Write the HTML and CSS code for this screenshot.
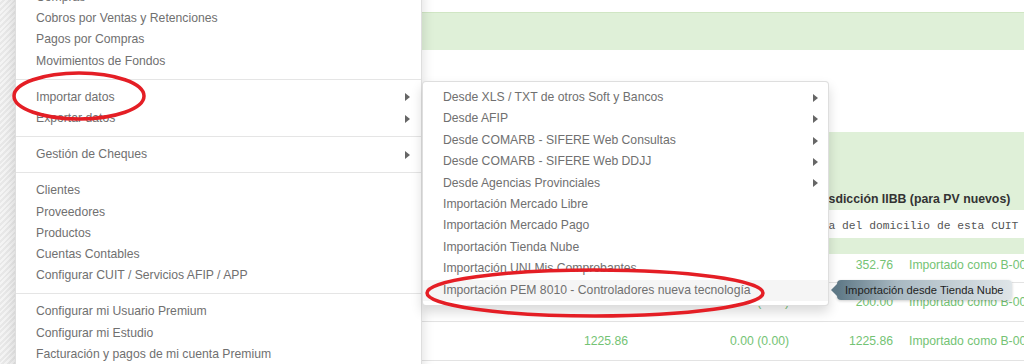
FILE: index.html
```html
<!DOCTYPE html>
<html lang="es">
<head>
    <meta charset="UTF-8">
    <title>Importar datos</title>
    <link rel="stylesheet" href="styles.css">
</head>
<body>
    <div class="page">
        <div class="strip"></div>
        <main class="content">
            <div class="band"></div>
            <div class="panel">
                <div class="panel-head">
                    <span class="head-label">Jurisdicción IIBB (para PV nuevos)</span>
                </div>
                <div class="input-row">
                    <span class="mono">Tomar la del domicilio de esta CUIT</span>
                </div>
                <div class="sub-head"></div>
                <div class="row first">
                    <span class="num"></span>
                    <span class="num"></span>
                    <span class="num">352.76</span>
                    <span class="status">Importado como B-0001</span>
                </div>
                <div class="row">
                    <span class="num">200.00</span>
                    <span class="num">0.00 (0.00)</span>
                    <span class="num">200.00</span>
                    <span class="status">Importado como B-0001</span>
                </div>
                <div class="row">
                    <span class="num">1225.86</span>
                    <span class="num">0.00 (0.00)</span>
                    <span class="num">1225.86</span>
                    <span class="status">Importado como B-0001</span>
                </div>
            </div>
        </main>
    </div>

    <!-- dropdown principal -->
    <ul class="menu main-menu">
        <li><a href="#">Compras</a></li>
        <li><a href="#">Cobros por Ventas y Retenciones</a></li>
        <li><a href="#">Pagos por Compras</a></li>
        <li><a href="#">Movimientos de Fondos</a></li>
        <li class="divider"></li>
        <li><a href="#">Importar datos <i class="caret"></i></a></li>
        <li><a href="#">Exportar datos <i class="caret"></i></a></li>
        <li class="divider"></li>
        <li><a href="#">Gestión de Cheques <i class="caret"></i></a></li>
        <li class="divider"></li>
        <li><a href="#">Clientes</a></li>
        <li><a href="#">Proveedores</a></li>
        <li><a href="#">Productos</a></li>
        <li><a href="#">Cuentas Contables</a></li>
        <li><a href="#">Configurar CUIT / Servicios AFIP / APP</a></li>
        <li class="divider"></li>
        <li><a href="#">Configurar mi Usuario Premium</a></li>
        <li><a href="#">Configurar mi Estudio</a></li>
        <li><a href="#">Facturación y pagos de mi cuenta Premium</a></li>
    </ul>

    <!-- submenu de Importar datos -->
    <ul class="menu sub-menu">
        <li><a href="#">Desde XLS / TXT de otros Soft y Bancos <i class="caret"></i></a></li>
        <li><a href="#">Desde AFIP <i class="caret"></i></a></li>
        <li><a href="#">Desde COMARB - SIFERE Web Consultas <i class="caret"></i></a></li>
        <li><a href="#">Desde COMARB - SIFERE Web DDJJ <i class="caret"></i></a></li>
        <li><a href="#">Desde Agencias Provinciales <i class="caret"></i></a></li>
        <li><a href="#">Importación Mercado Libre</a></li>
        <li><a href="#">Importación Mercado Pago</a></li>
        <li><a href="#">Importación Tienda Nube</a></li>
        <li><a href="#">Importación UNI Mis Comprobantes</a></li>
        <li class="active"><a href="#">Importación PEM 8010 - Controladores nueva tecnología</a></li>
    </ul>

    <div class="tip">Importación desde Tienda Nube</div>

    <!-- marcas rojas a mano -->
    <svg class="marks" width="1024" height="364" viewBox="0 0 1024 364">
        <ellipse cx="79" cy="96" rx="65" ry="23" fill="none" stroke="#e41e25" stroke-width="3.5"/>
        <ellipse cx="595" cy="293" rx="168" ry="23" fill="none" stroke="#e41e25" stroke-width="3.5"/>
    </svg>
</body>
</html>
```

FILE: styles.css
```css
body {
    margin: 0;
    width: 1024px;
    height: 364px;
    overflow: hidden;
    position: relative;
    font-family: "Liberation Sans", Arial, sans-serif;
    background-color: #fff;
}
.page {
    display: flex;
    height: 364px;
}
.strip {
    width: 15px;
    flex-shrink: 0;
    background: repeating-linear-gradient(135deg, #f4f4f4 0 2px, #e8e8e8 2px 4px);
}
.content {
    flex: 1;
    padding-top: 12px;
    min-width: 0;
    overflow: hidden;
}
.band {
    height: 37px;
    border-top: 1px solid #d0e6c4;
    background-color: #dff0d8;
    margin-bottom: 82px;
}
.panel-head,
.row {
    display: grid;
    grid-template-columns: 613px 161px 104px 1fr;
}
.panel-head {
    height: 78px;
    background-color: #dff0d8;
    align-items: end;
}
.head-label {
    grid-column: 3 / span 2;
    padding-left: 17px;
    padding-bottom: 3px;
    font-weight: bold;
    font-size: 12.3px;
    line-height: 15px;
    color: #333;
    white-space: nowrap;
}
.input-row {
    height: 28px;
    padding-left: 766px;
    line-height: 28px;
    white-space: nowrap;
}
.mono {
    font-family: "Liberation Mono", "Courier New", monospace;
    font-size: 11.3px;
    color: #555;
}
.sub-head {
    height: 16px;
    background-color: #dff0d8;
}
.row {
    height: 39px;
    border-bottom: 1px solid #e3e3e3;
    box-sizing: border-box;
    align-items: center;
    font-size: 12.2px;
    color: #74c374;
    white-space: nowrap;
}
.row.first {
    height: 29px;
    align-items: start;
    padding-top: 4px;
}
.num {
    text-align: right;
}
.status {
    padding-left: 16px;
}
.menu {
    position: absolute;
    margin: 0;
    list-style: none;
    width: 407px;
    box-sizing: border-box;
    background-color: #fff;
    border: 1px solid rgba(0,0,0,0.13);
    box-shadow: 0 6px 12px rgba(0,0,0,0.15);
    font-size: 12.2px;
}
.menu a {
    display: flex;
    justify-content: space-between;
    align-items: center;
    padding: 3px 11px 3px 20px;
    line-height: 15.2px;
    color: #707070;
    text-decoration: none;
    white-space: nowrap;
}
.menu .divider {
    height: 1px;
    margin: 7px 0;
    background-color: #e5e5e5;
}
.caret {
    width: 0;
    height: 0;
    border-left: 5px solid #666;
    border-top: 4px solid transparent;
    border-bottom: 4px solid transparent;
}
.main-menu {
    left: 15px;
    top: -19px;
    padding: 5px 0;
}
.sub-menu {
    left: 422px;
    top: 81px;
    padding: 5px 0 4px;
    border-radius: 4px;
}
.sub-menu a {
    line-height: 15.4px;
    padding-right: 10px;
}
.sub-menu .active a {
    background-color: #f5f5f5;
}
.tip {
    position: absolute;
    left: 837px;
    top: 280px;
    height: 20px;
    padding: 0 8px;
    line-height: 20px;
    font-size: 11.2px;
    color: #1e1e1e;
    white-space: nowrap;
    border-radius: 4px;
    background: linear-gradient(90deg, #5e7886 0%, #a9b9c2 35%, #dfe5e8 100%);
    box-shadow: 0 1px 3px rgba(0,0,0,0.2);
}
.tip::before {
    content: "";
    position: absolute;
    left: -6px;
    top: 4px;
    border-right: 6px solid #5e7886;
    border-top: 6px solid transparent;
    border-bottom: 6px solid transparent;
}
.marks {
    position: absolute;
    left: 0;
    top: 0;
    pointer-events: none;
}
```
